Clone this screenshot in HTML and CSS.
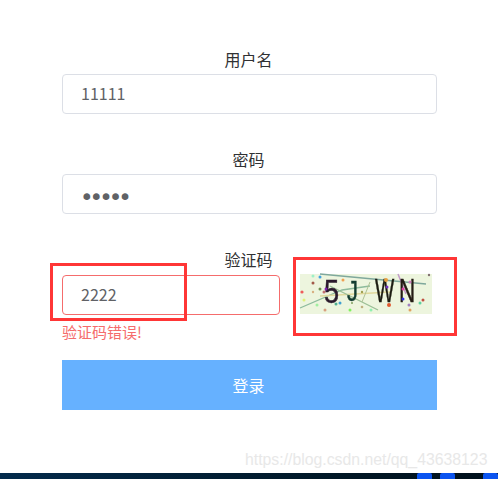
FILE: index.html
```html
<!DOCTYPE html>
<html lang="zh">
<head>
  <meta charset="UTF-8" />
  <title>登录</title>
  <meta name="viewport" content="width=device-width, initial-scale=1.0" />
  <link rel="stylesheet" href="styles.css">
</head>
<body>
  <div class="page">
    <form class="login-form">
      <div class="form-item">
        <label class="form-label" for="username">用户名</label>
        <input class="form-input" id="username" type="text" value="11111" />
      </div>

      <div class="form-item">
        <label class="form-label" for="password">密码</label>
        <input class="form-input password-input" id="password" type="password" value="11111" />
      </div>

      <div class="form-item captcha-item">
        <label class="form-label" for="captcha">验证码</label>
        <div class="captcha-row">
          <input class="form-input is-error" id="captcha" type="text" value="2222" />
          <svg class="captcha-image" viewBox="0 0 132 40" width="132" height="40">
            <rect width="132" height="40" fill="#edf5de" />
            <g fill="none" stroke-width="1">
              <path d="M20 0 L126 10" stroke="#7fa89c" stroke-width="1.5" />
              <path d="M0 34 L42 16 L70 12" stroke="#8dbb9c" stroke-width="1.3" />
              <path d="M20 22 L90 18" stroke="#e0d89c" stroke-width="1.5" />
              <path d="M30 12 L78 36" stroke="#9cbf96" stroke-width="1.3" />
              <path d="M70 8 L62 28" stroke="#afc294" />
              <path d="M98 0 L106 20" stroke="#c29bc9" stroke-width="1.5" />
            </g>
            <g class="captcha-chars">
              <text transform="translate(24 29) scale(0.8 1)" fill="#2a1a2c" stroke="#2a1a2c">5</text>
              <text transform="translate(47 27) scale(0.73 1)" fill="#123c30" stroke="#123c30" class="captcha-small">J</text>
              <text transform="translate(75 28) scale(0.6 1)" fill="#1c1c12" stroke="#1c1c12">W</text>
              <text transform="translate(99 28) scale(0.66 1)" fill="#241c14" stroke="#241c14">N</text>
            </g>
            <g>
              <circle cx="2" cy="18" r="1.6" fill="#ef5b5b" />
              <circle cx="4" cy="26" r="1.5" fill="#dff07a" />
              <circle cx="13" cy="9" r="1.5" fill="#a25a4a" />
              <circle cx="13" cy="2" r="1.5" fill="#9ff0c8" />
              <circle cx="20" cy="15" r="1.5" fill="#6f8f50" />
              <circle cx="13" cy="18" r="1.2" fill="#d8b080" />
              <circle cx="24" cy="18" r="1.5" fill="#c07070" />
              <circle cx="26" cy="15" r="1.5" fill="#8020b0" />
              <circle cx="20" cy="3" r="1.5" fill="#40a0e0" />
              <circle cx="25" cy="36" r="1.5" fill="#d8a080" />
              <circle cx="17" cy="31" r="1.5" fill="#a0f0a0" />
              <circle cx="36" cy="30" r="1.5" fill="#50b090" />
              <circle cx="40" cy="29" r="1.5" fill="#40a0d0" />
              <circle cx="43" cy="6" r="1.5" fill="#f0a050" />
              <circle cx="50" cy="36" r="1.5" fill="#80f060" />
              <circle cx="62" cy="18" r="1.2" fill="#a0a050" />
              <circle cx="71" cy="36" r="1.5" fill="#90f0b0" />
              <circle cx="62" cy="33" r="1.3" fill="#c0b080" />
              <circle cx="87" cy="13" r="1.5" fill="#7030c0" />
              <circle cx="89" cy="31" r="2" fill="#e05a30" />
              <circle cx="86" cy="6" r="2" fill="#e8a040" />
              <circle cx="103" cy="15" r="1.5" fill="#e040a0" />
              <circle cx="103" cy="25" r="1.5" fill="#3030e0" />
              <circle cx="110" cy="8" r="1.5" fill="#d080c0" />
              <circle cx="109" cy="31" r="1.5" fill="#a080c0" />
              <circle cx="110" cy="36" r="1.5" fill="#e0a060" />
              <circle cx="120" cy="29" r="1.5" fill="#60d0a0" />
              <circle cx="123" cy="26" r="1.5" fill="#c05040" />
              <circle cx="129" cy="1" r="1.2" fill="#807070" />
              <circle cx="52" cy="29" r="1" fill="#80a060" />
            </g>
          </svg>
        </div>
        <div class="form-error">验证码错误!</div>
      </div>

      <button class="login-button" type="button">登录</button>
    </form>

    <div class="bottom-bar">
      <span class="bar-chip chip-one"></span>
      <span class="bar-chip chip-two"></span>
      <span class="bar-chip chip-three"></span>
    </div>
  </div>

  <div class="mark mark-input"></div>
  <div class="mark mark-captcha"></div>
  <div class="watermark">https://blog.csdn.net/qq_43638123</div>
</body>
</html>
```

FILE: styles.css
```css
body {
  font-family: "Noto Sans CJK SC", "Liberation Sans", sans-serif;
  margin: 0;
  background-color: #ffffff;
  color: #303133;
  overflow: hidden;
}

.page {
  display: flex;
  flex-direction: column;
  height: 100vh;
}

.login-form {
  display: flex;
  flex-direction: column;
  width: 375px;
  margin-left: 62px;
  padding-top: 48px;
}

.form-item {
  display: flex;
  flex-direction: column;
  margin-bottom: 34px;
}

.form-label {
  font-size: 16px;
  line-height: 22px;
  text-align: center;
  padding-right: 2px;
  margin-bottom: 4px;
}

.form-input {
  box-sizing: border-box;
  width: 100%;
  height: 40px;
  padding: 0 18px 2px;
  font-family: inherit;
  font-size: 16px;
  color: #606266;
  background-color: #ffffff;
  border: 1px solid #dcdfe6;
  border-radius: 4px;
  outline: none;
}

.password-input {
  font-family: "DejaVu Sans", sans-serif;
  font-size: 23px;
  letter-spacing: -4px;
  padding: 6px 18px 0 17px;
}

.captcha-item {
  margin-bottom: 18px;
}

.captcha-row {
  display: flex;
  align-items: flex-start;
  gap: 20px;
  height: 41px;
}

.captcha-row .form-input {
  width: 218px;
  margin-top: 1px;
}

.is-error {
  border-color: #f56c6c;
}

.captcha-image {
  display: block;
  flex: none;
  overflow: visible;
  filter: blur(0.4px);
}

.captcha-chars {
  font-family: "Liberation Sans", sans-serif;
  font-size: 34px;
  stroke-width: 0.5;
}

.captcha-small {
  font-size: 30px;
}

.form-error {
  font-size: 15px;
  line-height: 20px;
  margin-top: 7px;
  color: #f56c6c;
}

.login-button {
  height: 50px;
  padding: 0 2px 0 0;
  font-family: inherit;
  font-size: 16px;
  color: #ffffff;
  background-color: #66b1ff;
  border: none;
}

.bottom-bar {
  display: flex;
  margin-top: auto;
  height: 6px;
  background: linear-gradient(to right, #032b4c, #001624 70%, #00101c);
}

.bar-chip {
  width: 15px;
  height: 6px;
  background-color: #0b54f0;
  border-radius: 2px 2px 0 0;
}

.chip-one {
  margin-left: 417px;
}

.chip-two {
  margin-left: 8px;
}

.chip-three {
  margin-left: 28px;
}

.mark {
  position: absolute;
  box-sizing: border-box;
  border: 3px solid #ff3636;
}

.mark-input {
  left: 50px;
  top: 263px;
  width: 137px;
  height: 58px;
}

.mark-captcha {
  left: 293px;
  top: 257px;
  width: 164px;
  height: 79px;
}

.watermark {
  position: absolute;
  left: 245px;
  top: 451px;
  font-family: "Liberation Sans", sans-serif;
  font-size: 15.8px;
  line-height: 18px;
  color: #e8e8e8;
}
```
